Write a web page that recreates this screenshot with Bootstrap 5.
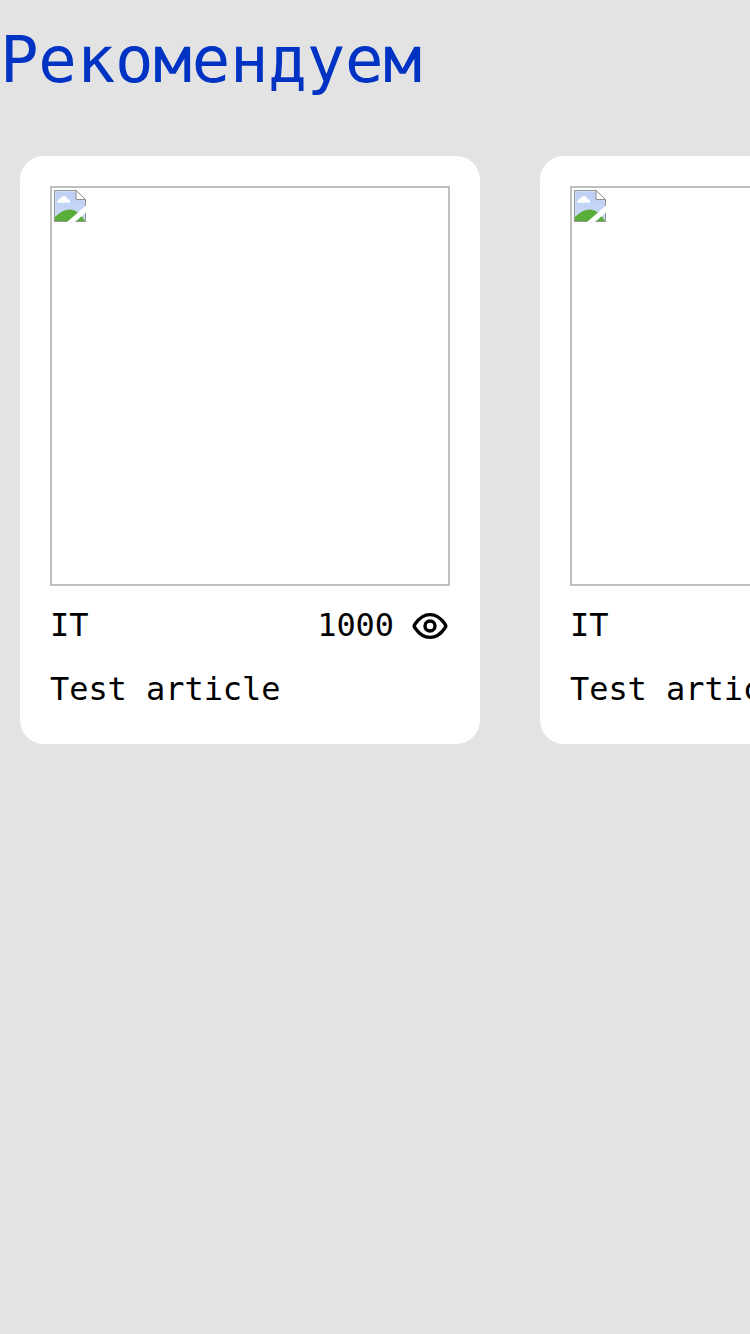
<!DOCTYPE html>
<html lang="ru">
<head>
<meta charset="utf-8">
<meta name="viewport" content="width=device-width, initial-scale=1">
<title>Рекомендуем</title>
<link href="https://cdn.jsdelivr.net/npm/bootstrap@5.3.0/dist/css/bootstrap.min.css" rel="stylesheet">
<style>
  body { background: #e3e3e3; color: #000; font-family: "DejaVu Sans Mono", monospace; font-size: 32px; line-height: 38px; letter-spacing: -.06px; }
  .section-title { color: #0033c4; font-size: 64px; font-weight: 400; line-height: 84px; letter-spacing: -.2px; padding-top: 18px; margin-bottom: 54px; }
  .feed { gap: 60px; padding-left: 20px; }
  .article { width: 460px; height: 588px; padding: 30px; border: 0; border-radius: 24px; color: #000; background: #fff; }
  .thumb { width: 400px; height: 400px; border: 2px solid #c0c0c0; padding: 2px; }
  .thumb svg, .views svg { display: block; }
  .meta { height: 40px; margin-top: 20px; }
  .views { gap: 16px; }
  .article-name { margin-top: 24px; }
</style>
</head>
<body class="overflow-hidden">
<svg width="0" height="0" class="position-absolute" xmlns="http://www.w3.org/2000/svg">
  <defs>
    <linearGradient id="sky" x1="0" y1="0" x2="0" y2="1"><stop offset="0" stop-color="#bccff3"/><stop offset="1" stop-color="#cbdafa"/></linearGradient>
  </defs>
  <symbol id="picture" viewBox="0 0 32 32">
    <path d="M.5.5H22L31.500 9.500V31.500H.5z" fill="url(#sky)" stroke="#919191"/>
    <path d="M1.500 31V1.500H22" fill="none" stroke="#d2dff8"/>
    <path d="M22 .5V9.500H31.500z" fill="#fff" stroke="#919191"/>
    <path d="M3.500 12.700C3 10.500 4.500 9 6.500 9c1-4 6-4 7 0 2.500.3 3.300 2.500 2.300 3.700z" fill="#fff"/>
    <path d="M1 27C6 22 11 19.300 16 19.500c6 .5 11 4.500 15 11.500H1z" fill="#5aad38"/>
    <path d="M.5 22V31.500H31.500" fill="none" stroke="#919191"/>
    <path d="M32.500 15V22L20.500 32.500H12.500z" fill="#fff"/>
  </symbol>
  <symbol id="eye" viewBox="0 0 40 40">
    <g fill="none" stroke="#000" stroke-width="3.400">
      <path d="M5.200 22.200C3.800 20.600 3.800 19.400 5.200 17.800C8.300 13.400 13.700 8.600 20 8.600S31.700 13.400 34.800 17.800C36.200 19.400 36.200 20.600 34.800 22.200C31.700 26.600 26.300 31.400 20 31.400S8.300 26.600 5.200 22.200z"/>
      <circle cx="20" cy="20" r="5"/>
    </g>
  </symbol>
</svg>
<main>
  <h1 class="section-title">Рекомендуем</h1>
  <div class="feed d-flex">
    <article class="article card flex-shrink-0">
      <div class="thumb"><svg width="32" height="32"><use href="#picture"/></svg></div>
      <div class="meta d-flex justify-content-between">
        <span>IT</span>
        <div class="views d-flex"><span>1000</span><svg width="40" height="40"><use href="#eye"/></svg></div>
      </div>
      <div class="article-name">Test article</div>
    </article>
    <article class="article card flex-shrink-0">
      <div class="thumb"><svg width="32" height="32"><use href="#picture"/></svg></div>
      <div class="meta d-flex justify-content-between">
        <span>IT</span>
        <div class="views d-flex"><span>1000</span><svg width="40" height="40"><use href="#eye"/></svg></div>
      </div>
      <div class="article-name">Test article</div>
    </article>
  </div>
</main>
<script src="https://cdn.jsdelivr.net/npm/bootstrap@5.3.0/dist/js/bootstrap.bundle.min.js"></script>
</body>
</html>
